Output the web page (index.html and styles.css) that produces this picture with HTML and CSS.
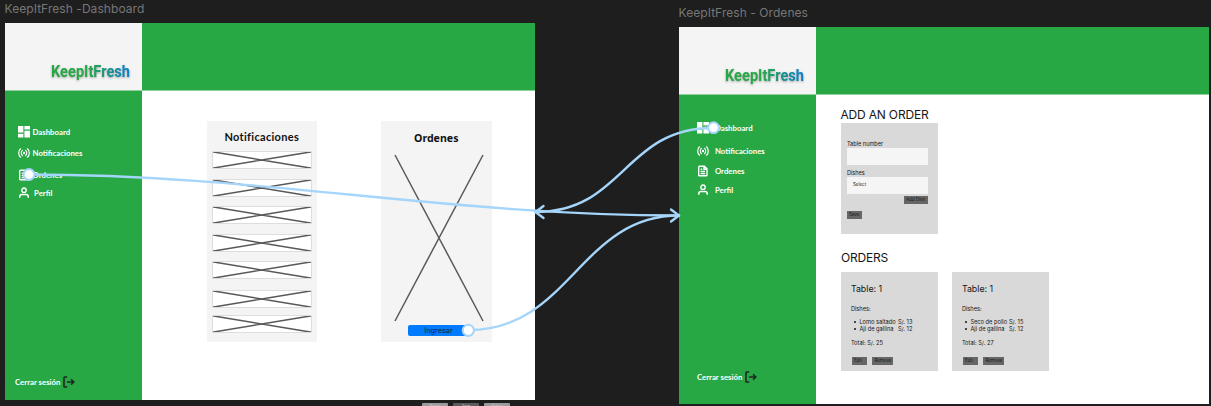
FILE: index.html
```html
<!DOCTYPE html>
<html lang="es">
<head>
<meta charset="utf-8">
<title>KeepItFresh</title>
<link rel="stylesheet" href="styles.css">
</head>
<body>
<svg class="defs" width="0" height="0" aria-hidden="true">
  <defs>
    <linearGradient id="brand" x1="0" x2="1" y1="0" y2="0"><stop offset=".45" stop-color="#28a745"/><stop offset="1" stop-color="#0a7fd0"/></linearGradient>
    <symbol id="i-dash" viewBox="0 0 12 12"><path fill="#fff" d="M0 0h5.400v6.600H0zM6.400 0H12v3.600H6.400zM0 7.800h5.400V11.400H0zM6.400 4.800H12v6.600H6.400z"/></symbol>
    <symbol id="i-bell" viewBox="0 0 12 12"><g fill="none" stroke="#fff" stroke-width="1.200" stroke-linecap="round"><path d="M2.500 1.800C.1 4 .1 8 2.500 10.200M4.400 3.400C3 4.800 3 7.200 4.400 8.600M9.500 1.800C11.900 4 11.900 8 9.500 10.200M7.600 3.400C9 4.800 9 7.200 7.600 8.600"/></g><circle cx="6" cy="6" r="1.200" fill="#fff"/></symbol>
    <symbol id="i-doc" viewBox="0 0 12 12"><path d="M2.500 1.200h4.800l2.700 2.700v6.100q0 .8-.8.800H2.500q-.8 0-.8-.8V2q0-.8.800-.8zM7 1.200v3h3M3.700 6.400h4.300M3.700 8.500h4.300M3.700 4.200h1.500" fill="none" stroke="#fff" stroke-width="1.400"/></symbol>
    <symbol id="i-user" viewBox="0 0 12 12"><circle cx="6" cy="3.200" r="2.200" fill="none" stroke="#fff" stroke-width="1.400"/><path d="M1.800 10.800V9.600Q1.800 7.500 4 7.500h4q2.200 0 2.200 2.100v1.200" fill="none" stroke="#fff" stroke-width="1.500"/></symbol>
    <symbol id="i-exit" viewBox="0 0 12 12"><path d="M4.200 1H1.700Q1 1 1 1.700v8.600q0 .7.700.7h2.500M4 6h6.800M8 3.200 10.800 6 8 8.800" fill="none" stroke="#1b2a20" stroke-width="1.600"/></symbol>
    <symbol id="cross" viewBox="0 0 100 18" preserveAspectRatio="none"><path d="M0 .7 100 17.300M0 17.300 100 .7" stroke="#595959" stroke-width="1.500"/></symbol>
  </defs>
</svg>
<main class="canvas">
  <p class="frame-name name-a">KeepItFresh -Dashboard</p>
  <section class="frame frame-a">
    <header class="top">
      <div class="brand"><svg width="84" height="26"><text x="1" y="14.500" textLength="79" lengthAdjust="spacingAndGlyphs">KeepItFresh</text></svg></div>
    </header>
    <aside class="side">
      <nav class="nav">
        <a class="item"><svg><use href="#i-dash"/></svg><span>Dashboard</span></a>
        <a class="item"><svg><use href="#i-bell"/></svg><span>Notificaciones</span></a>
        <a class="item"><svg><use href="#i-doc"/></svg><span>Ordenes</span></a>
        <a class="item profile"><svg><use href="#i-user"/></svg><span>Perfil</span></a>
      </nav>
      <a class="exit"><span>Cerrar sesión</span><svg><use href="#i-exit"/></svg></a>
    </aside>
    <div class="content panels">
      <article class="panel">
        <h2>Notificaciones</h2>
        <div class="notes">
          <svg class="note"><use href="#cross"/></svg>
          <svg class="note"><use href="#cross"/></svg>
          <svg class="note"><use href="#cross"/></svg>
          <svg class="note"><use href="#cross"/></svg>
          <svg class="note"><use href="#cross"/></svg>
          <svg class="note low"><use href="#cross"/></svg>
          <svg class="note last"><use href="#cross"/></svg>
        </div>
      </article>
      <article class="panel orders">
        <h2>Ordenes</h2>
        <svg class="big" viewBox="0 0 88 166"><path d="M0 0 88 166M88 0 0 166" stroke="#5a5a5a" stroke-width="1.500"/></svg>
        <button class="enter">Ingresar</button>
      </article>
    </div>
  </section>

  <p class="frame-name name-b">KeepItFresh - Ordenes</p>
  <section class="frame frame-b">
    <header class="top">
      <div class="brand"><svg width="84" height="26"><text x="1" y="14.500" textLength="79" lengthAdjust="spacingAndGlyphs">KeepItFresh</text></svg></div>
    </header>
    <aside class="side">
      <nav class="nav">
        <a class="item"><svg><use href="#i-dash"/></svg><span>Dashboard</span></a>
        <a class="item"><svg><use href="#i-bell"/></svg><span>Notificaciones</span></a>
        <a class="item"><svg><use href="#i-doc"/></svg><span>Ordenes</span></a>
        <a class="item profile"><svg><use href="#i-user"/></svg><span>Perfil</span></a>
      </nav>
      <a class="exit"><span>Cerrar sesión</span><svg><use href="#i-exit"/></svg></a>
    </aside>
    <div class="content order-page">
      <h1>ADD AN ORDER</h1>
      <form class="form">
        <label>Table number</label>
        <div class="field"></div>
        <label>Dishes</label>
        <div class="field select">Select</div>
        <span class="btn add">Add Dish</span>
        <span class="btn save">Save</span>
      </form>
      <h1 class="second">ORDERS</h1>
      <div class="cards">
        <article class="card">
          <h3>Table: 1</h3>
          <p class="dishes">Dishes:</p>
          <ul><li><span class="d1">Lomo saltado</span><span>S/. 13</span></li><li><span class="d1">Aji de gallina</span><span>S/. 12</span></li></ul>
          <p>Total: S/. 25</p>
          <div class="actions"><span class="btn">Edit</span><span class="btn remove">Remove</span></div>
        </article>
        <article class="card">
          <h3>Table: 1</h3>
          <p class="dishes">Dishes:</p>
          <ul><li><span class="d1">Seco de pollo</span><span>S/. 15</span></li><li><span class="d1">Aji de gallina</span><span>S/. 12</span></li></ul>
          <p>Total: S/. 27</p>
          <div class="actions"><span class="btn">Edit</span><span class="btn remove">Remove</span></div>
        </article>
      </div>
    </div>
  </section>

  <div class="chips"><span>Button</span><span class="dark">Save</span><span>Button</span></div>

  <svg class="links" width="1211" height="406" viewBox="0 0 1211 406">
    <g fill="none" stroke="#a5d5fa" stroke-width="2.400" stroke-linecap="round" stroke-linejoin="round">
      <path d="M29 174.500C260 174.500 448 215.500 679 215.500"/>
      <path d="M713 128C624 128 624 212 535.500 212"/>
      <path d="M468.500 330C570 330 580 215.500 679 215.500"/>
      <path d="M671 209.500 679 215.500 671 221.500M543.500 206 535.500 212 543.500 218"/>
    </g>
    <g fill="#fff" stroke="#a5d5fa" stroke-width="2"><circle cx="29" cy="174.500" r="5.400"/><circle cx="713.500" cy="127.700" r="5.400"/><circle cx="468.300" cy="330.300" r="5.600"/></g>
  </svg>
</main>
</body>
</html>
```
FILE: styles.css
```css
* { box-sizing: border-box; }
body { margin: 0; background: #1e1e1e; }
p, h1, h2, h3, ul { margin: 0; padding: 0; font-weight: 400; }
.defs { position: absolute; }
.canvas { position: relative; width: 1211px; height: 406px; overflow: hidden; background: #1e1e1e; font-family: Inter, "Liberation Sans", sans-serif; }

/* frames on the canvas */
.frame-name { position: absolute; font-size: 12px; line-height: 16px; color: #777; white-space: nowrap; }
.name-a { left: 4.500px; top: .5px; letter-spacing: .06px; }
.name-b { left: 678.500px; top: 4.500px; letter-spacing: .06px; }
.frame { position: absolute; width: 530px; height: 377px; display: grid; grid-template: 67.500px 1fr / 137px 1fr; background: #fff; overflow: hidden; }
.frame-a { left: 5px; top: 23px; }
.frame-b { left: 679.400px; top: 27px; }
.top { grid-column: 1 / 3; display: flex; height: 67.500px; background: #28a745; border-bottom: 1px solid #8fd09e; }
.brand { width: 137px; padding: 39px 0 0 45px; background: #f4f4f4; }
.brand svg { display: block; filter: drop-shadow(0 1px .8px #0005); }
.brand text { font: 700 17px Roboto, sans-serif; fill: url(#brand); }

/* sidebar */
.side { background: #28a745; color: #fff; font: 700 7.800px/12px Lato, sans-serif; display: flex; flex-direction: column; justify-content: space-between; }
.nav { padding: 35.200px 0 0 13px; }
.item { display: flex; align-items: center; height: 12px; gap: 2.500px; margin-bottom: 9.500px; letter-spacing: 0; }
.item svg, .exit svg { width: 12px; height: 12px; flex: none; }
.item:nth-child(3) { margin-bottom: 6.500px; }
.profile { gap: 4px; }
.exit { display: flex; align-items: center; gap: 3px; padding: 0 0 12px 10px; }
.frame-b .nav { padding: 27.500px 0 0 18px; }
.frame-b .item { gap: 5.500px; margin-bottom: 11px; }
.frame-b .item:nth-child(n+2) { margin-bottom: 7.500px; }
.frame-b .exit { padding: 0 0 21px 17.500px; }

/* dashboard */
.panels { display: flex; gap: 64px; padding: 30.500px 0 0 64.500px; }
.panel { width: 110.500px; height: 221px; padding-top: 8px; background: #f4f4f4; }
.panel h2 { font: 700 11px/16px Lato, sans-serif; text-align: center; letter-spacing: .3px; color: #111; }
.notes { display: flex; flex-direction: column; gap: 9.500px; padding: 6px 0 0 5.500px; }
.note { width: 100px; height: 18px; background: #fff; outline: 1px solid #ddd; outline-offset: -1px; }
.low { margin-top: 1px; }
.last { margin-top: -2.500px; }
.orders h2 { font-family: "Noto Sans", sans-serif; font-size: 10.600px; letter-spacing: 0; line-height: 18px; }
.big { display: block; width: 88px; height: 166px; margin: 7.500px 0 0 13.500px; overflow: visible; }
.enter { display: block; width: 61px; height: 11px; margin: 4.500px 0 0 27px; padding: 0; border: 0; border-radius: 2px; background: #007bff; color: #14223c; font: 7.300px/11px Inter, sans-serif; }

/* orders */
.order-page { padding: 11.500px 0 0 24px; color: #161616; }
.order-page h1 { font-size: 12px; line-height: 17px; letter-spacing: -.17px; }
.form { width: 97px; height: 110.500px; margin-left: .5px; padding: 17px 10px 0 6px; background: #d9d9d9; display: flex; flex-direction: column; }
.form label { font-size: 5.600px; line-height: 8px; }
.field { height: 17px; background: #f5f5f5; margin-bottom: 4px; flex: none; }
.select { padding-left: 6px; font-size: 4.500px; line-height: 16px; margin-bottom: 2px; }
.btn { height: 8px; padding: 0 2px; background: #666; font-size: 4.500px; line-height: 7.500px; white-space: nowrap; }
.add { align-self: flex-end; width: 24px; }
.save { align-self: flex-start; width: 15.500px; margin-top: 7px; }
.order-page .second { margin-top: 15px; margin-left: .5px; }
.cards { display: flex; gap: 14px; margin: 6px 0 0 .5px; }
.card { width: 97px; height: 99.500px; padding: 10.500px 0 0 10px; background: #d9d9d9; font-size: 5.700px; line-height: 7px; }
.card h3 { font-size: 8.800px; line-height: 13px; }
.dishes { margin-top: 9.500px; }
.card ul { list-style: none; margin: 6.500px 0; }
.card li { display: flex; align-items: center; }
.card li::before { content: ""; width: 2px; height: 2px; border-radius: 50%; background: #161616; margin: 0 3.500px 0 3px; }
.d1 { width: 38.500px; white-space: nowrap; }
.actions { display: flex; gap: 5px; margin: 11px 0 0 1px; }
.actions .btn { width: 15.500px; }
.actions .remove { width: 21px; }

.chips { position: absolute; left: 422px; top: 402.500px; display: flex; gap: 5px; }
.chips span { width: 26px; height: 8px; border-radius: 1px; background: #9b9b9b; color: #ccc; font-size: 3.500px; line-height: 6px; text-align: center; }
.chips .dark { background: #5c5c5c; }
.links { position: absolute; left: 0; top: 0; }
```
